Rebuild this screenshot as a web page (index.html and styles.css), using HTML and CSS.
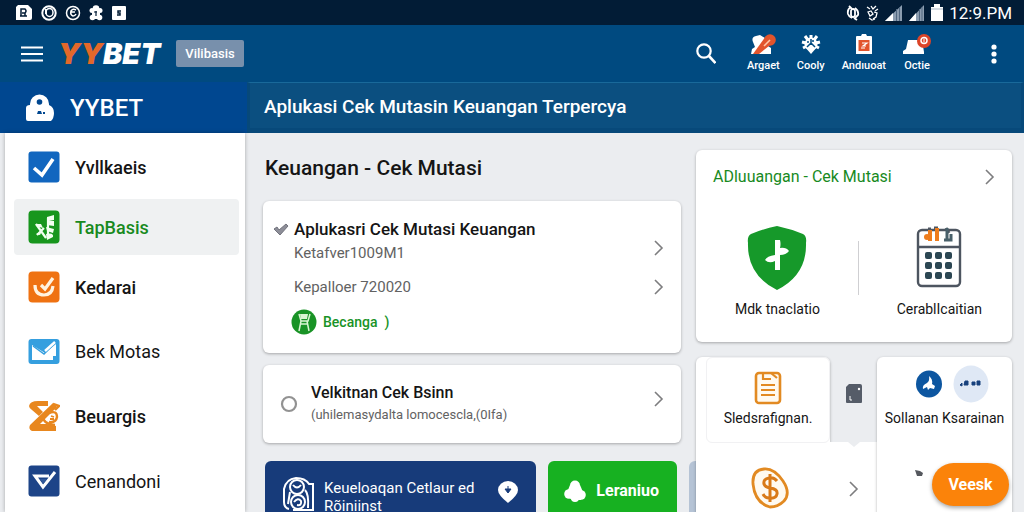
FILE: index.html
```html
<!DOCTYPE html>
<html lang="id">
<head>
  <meta charset="UTF-8" />
  <meta name="viewport" content="width=device-width, initial-scale=1" />
  <title>YYBET</title>
  <link rel="stylesheet" href="styles.css">
</head>
<body>

<div class="statusbar">
  <div class="status-left">
    <svg width="18" height="16" viewBox="0 0 18 16"><path d="M3 0h10l4 4v9a2 2 0 0 1-2 2H1V2z" fill="#fff"/><path d="M6 11V4h4q2 2 0 4H7M10 8v3H5M10 11h2" fill="none" stroke="#031c36" stroke-width="1.5"/></svg>
    <svg width="16" height="16" viewBox="0 0 16 16"><circle cx="8" cy="8" r="6.7" fill="none" stroke="#fff" stroke-width="2"/><ellipse cx="8.500" cy="7.500" rx="3.500" ry="4" fill="none" stroke="#fff" stroke-width="1.500"/><path d="M5 4v5" stroke="#fff" stroke-width="2"/></svg>
    <svg width="16" height="16" viewBox="0 0 16 16"><circle cx="8" cy="8" r="6.500" fill="none" stroke="#fff" stroke-width="1.500"/><path d="M11 5Q8 3 6 6q-1 4 2 5 2 0 3-2M6 7h4" fill="none" stroke="#fff" stroke-width="1.600"/></svg>
    <svg width="14" height="16" viewBox="0 0 14 16"><g fill="#fff"><circle cx="7" cy="3.500" r="3.300"/><circle cx="3" cy="5.500" r="2.500"/><circle cx="11" cy="5.500" r="2.500"/><circle cx="3.500" cy="12.500" r="2.800"/><circle cx="10.500" cy="12.500" r="2.800"/><rect x="3" y="4" width="8" height="10"/></g><path d="M5 7h3M7 6v5" stroke="#031c36" stroke-width="1.200"/></svg>
    <svg width="16" height="16" viewBox="0 0 16 16"><rect x="1" y="1" width="14" height="14" rx="1" fill="#fff"/><path d="M10 6H7v2h2v2H6" fill="none" stroke="#031c36" stroke-width="1.500"/></svg>
  </div>
  <div class="status-right">
    <svg width="14" height="18" viewBox="0 0 14 18"><g fill="none" stroke="#fff" stroke-width="1.800"><path d="M5 3Q1 5 2 10q1 3 4 4M3 2l3 3M9 4q4 3 3 7l-3 3"/><rect x="5" y="5" width="4" height="8" rx="2"/><path d="M8 14l3 2"/></g></svg>
    <svg width="13" height="18" viewBox="0 0 13 18"><g fill="none" stroke="#fff" stroke-width="1.300"><path d="M1 3l3 2M5 2l2 3 3-3M12 5L9 7M2 8l3-1 2 3-3 2zM8 8l3 1-1 4-3 2M3 14l3 2 3-1" /></g></svg>
    <svg width="18" height="18" viewBox="0 0 18 18"><path d="M17 1v16H0z" fill="#8b9caf"/><path d="M8 9v8H0z" fill="#fff"/><path d="M11.500 5v12M14.500 3v14" stroke="#50667f"/></svg>
    <svg width="16" height="18" viewBox="0 0 16 18"><path d="M15 1v16H0z" fill="#8b9caf"/><path d="M7 9v8H0z" fill="#fff"/><path d="M10.500 5v12M13 3v14" stroke="#50667f"/></svg>
    <svg width="12" height="18" viewBox="0 0 12 18"><path d="M3 0h6v3h3v14H0V3h3z" fill="#fff"/><path d="M0 5h12" stroke="#a9b5c3"/></svg>
    <span>12:9.PM</span>
  </div>
</div>

<header class="topbar">
  <button class="icon-btn" aria-label="Menu">
    <svg width="22" height="16" viewBox="0 0 22 16"><path d="M0 1.500h22M0 8h22M0 14.500h22" stroke="#fff" stroke-width="2.200"/></svg>
  </button>
  <a href="#" class="logo"><span>YY</span>BET</a>
  <button class="chip">Vilibasis</button>
  <div class="tools">
    <button class="icon-btn search" aria-label="Cari">
      <svg width="20" height="21" viewBox="0 0 20 21"><circle cx="8" cy="8" r="6.700" fill="none" stroke="#fff" stroke-width="2.200"/><path d="M12.500 12.500l7 7.500" stroke="#fff" stroke-width="2.600"/></svg>
    </button>
    <button class="tool">
      <svg width="28" height="22" viewBox="0 0 28 22"><path d="M4 8Q2 3 7 2l4-1 5 3v6l6 4v6H2l1-5 3-2z" fill="#fff"/><circle cx="21" cy="6" r="5.800" fill="#e2542c"/><path d="M4 20L17 2l8 6-15 12z" fill="#e2542c"/><path d="M15 12l6-6" stroke="#ffc8a8" stroke-width="1.600"/></svg>
      Argaet
    </button>
    <button class="tool">
      <svg width="20" height="22" viewBox="0 0 20 22"><circle cx="10" cy="10" r="6.500" fill="#fff"/><path d="M4 13l6 7 6-7z" fill="#fff"/><g stroke="#fff" stroke-width="3"><path d="M10 1v4M1 8l4 1M19 8l-4 1M4 2l3 4M16 2l-3 4M2 14l4-2M18 14l-4-2"/></g><path d="M10 5v4l-4 4M10 9l4 4M6 8h2M12 6v2" fill="none" stroke="#004a80" stroke-width="1.500"/></svg>
      Cooly
    </button>
    <button class="tool">
      <svg width="18" height="22" viewBox="0 0 18 22"><path d="M2 2h4l1-2h4l1 2h4q1 0 1 1v17H1V3q0-1 1-1z" fill="#fff"/><rect x="3.500" y="6" width="11" height="11" fill="#e2542c"/><path d="M7 9h5l-4 3h3M6 14h4" fill="none" stroke="#fff" stroke-width="1.200"/></svg>
      Andıuoat
    </button>
    <button class="tool">
      <svg width="28" height="22" viewBox="0 0 28 22"><path d="M5 6h14l2 12v2H0v-3l3-2z" fill="#fff"/><circle cx="21" cy="7" r="7" fill="#dc4428"/><circle cx="21" cy="6.500" r="3" fill="none" stroke="#fff" stroke-width="1.500"/><path d="M21 4.500v4" stroke="#fff"/></svg>
      Octie
    </button>
    <button class="icon-btn more" aria-label="Lainnya">
      <svg width="6" height="20" viewBox="0 0 6 20"><g fill="#fff"><circle cx="3" cy="3" r="2.600"/><circle cx="3" cy="10" r="2.600"/><circle cx="3" cy="17" r="2.600"/></g></svg>
    </button>
  </div>
</header>

<div class="subbar">
  <div class="account">
    <svg width="28" height="28" viewBox="0 0 28 28"><path d="M4 11v-1a9.500 9.500 0 0 1 19 0v1q5 2 5 8 0 5-3 8H2q-2 0-2-2V14q0-3 4-3z" fill="#fff"/><circle cx="13.500" cy="8" r="2.800" fill="#004790"/><path d="M12 17h3l1 3h-5zM17 18h2v2h-2z" fill="#004790"/></svg>
    YYBET
  </div>
  <h1 class="page-title">Aplukasi Cek Mutasin Keuangan Terpercya</h1>
</div>

<div class="layout">
  <nav class="sidebar">
    <div class="menu-group">
      <a href="#">
        <svg width="32" height="32" viewBox="0 0 32 32"><rect x=".5" y=".5" width="31" height="31" rx="3" fill="#1166bf"/><path d="M6 17l8 7L25 8" fill="none" stroke="#fff" stroke-width="3.600"/></svg>
        Yvllkaeis
      </a>
      <a href="#" class="active">
        <svg width="32" height="34" viewBox="0 0 32 34"><rect x=".5" y=".5" width="31" height="33" rx="4" fill="#17961d"/><path d="M19 7l7-2v5l-5 1h5v5l-7-1v-8zM18 17l8 2-1 4-6-2zM18 24q8-2 7 3l-6 3zM7 14h6l2 4-4-1zM8 24l6-3-2 4z" fill="#f2fff0"/><path d="M8 14l10 14M16 18l-7 7M20 8v20" stroke="#f2fff0" stroke-width="2.200"/></svg>
        TapBasis
      </a>
      <a href="#">
        <svg width="32" height="32" viewBox="0 0 32 32"><rect x=".5" y=".5" width="31" height="31" rx="4" fill="#ef7212"/><path d="M7 14q0 10 9 10 8 0 9-9M13 14l4 4 8-11" fill="none" stroke="#fff3e0" stroke-width="3.200"/></svg>
        Kedarai
      </a>
    </div>
    <div class="menu-group spaced">
      <a href="#" class="light">
        <svg width="32" height="32" viewBox="0 0 32 32"><rect x=".5" y="4" width="31" height="25" rx="3" fill="#359fdf"/><path d="M4 10l13 8L28 9v12h-3v4H4z" fill="#fff"/><path d="M5 11l11 8L28 7" fill="none" stroke="#359fdf" stroke-width="1.500"/><path d="M17 16l10-9" stroke="#fff" stroke-width="2.500"/></svg>
        Bek Motas
      </a>
      <a href="#">
        <svg width="32" height="32" viewBox="0 0 32 32"><path d="M1 6q1-5 9-5h10v5H9l6 6-4 4-7-6q-3-2-3-4z" fill="#e8871e"/><path d="M2 25L25 3l4 4-17 17h7l9 2v5H4q-4-2-2-6z" fill="#e8871e"/><path d="M25 4l6 2-4 4M21 13q8-3 8 4-1 6-8 5M15 19q4 6 12 6" fill="none" stroke="#e8871e" stroke-width="2.400"/><path d="M23 16l3 1M22 19h4" fill="none" stroke="#e8871e" stroke-width="1.800"/></svg>
        Beuargis
      </a>
      <a href="#" class="light">
        <svg width="32" height="32" viewBox="0 0 32 32"><rect x=".5" y=".5" width="31" height="31" rx="3" fill="#1d4488"/><path d="M21 11H7l8 11L27 7" fill="none" stroke="#fff" stroke-width="3"/><path d="M12 14h7l-4 5z" fill="#31599a"/></svg>
        Cenandoni
      </a>
    </div>
  </nav>

  <main class="content">
    <section class="feed">
      <h2>Keuangan - Cek Mutasi</h2>

      <div class="card balance">
        <a href="#" class="row">
          <svg class="lead" width="16" height="14" viewBox="0 0 16 14"><path d="M1 7l3-2 2 3 7-6 2 2-8 9z" fill="#8d8e98" stroke="#72737d"/></svg>
          <span class="text"><b>Aplukasri Cek Mutasi Keuangan</b><small>Ketafver1009M1</small></span>
          <svg class="chevron low" width="10" height="16" viewBox="0 0 10 16"><path d="M1 1l7 7-7 7" fill="none" stroke="#7d7d7f" stroke-width="1.600"/></svg>
        </a>
        <a href="#" class="row second">
          <span class="text"><small>Kepalloer 720020</small></span>
          <svg class="chevron" width="10" height="16" viewBox="0 0 10 16"><path d="M1 1l7 7-7 7" fill="none" stroke="#7d7d7f" stroke-width="1.600"/></svg>
        </a>
        <a href="#" class="row tag">
          <svg width="26" height="26" viewBox="0 0 26 26"><circle cx="13" cy="13" r="12.500" fill="#199326"/><path d="M8 5l2 7h7l2-7M8 22l2-10M18 22l-2-10M9 15h8" fill="none" stroke="#d9f5d2" stroke-width="1.500"/><path d="M9 5h8l-1 5h-6z" fill="#d9f5d2"/></svg>
          Becanga &nbsp;)
        </a>
      </div>

      <div class="card">
        <a href="#" class="row option">
          <svg width="18" height="18" viewBox="0 0 18 18"><circle cx="9" cy="9" r="7" fill="none" stroke="#929292" stroke-width="2.200"/></svg>
          <span class="text"><b>Velkitnan Cek Bsinn</b><small>(uhilemasydalta lomocescla,(0Ifa)</small></span>
          <svg class="chevron" width="10" height="16" viewBox="0 0 10 16"><path d="M1 1l7 7-7 7" fill="none" stroke="#7d7d7f" stroke-width="1.600"/></svg>
        </a>
      </div>

      <div class="actions">
        <button class="action blue">
          <svg width="32" height="36" viewBox="0 0 32 36"><g fill="none" stroke="#fff" stroke-width="2"><path d="M6 32Q1 31 1 25V12Q3 2 13 1q9 0 13 6h4v26H10"/><circle cx="14" cy="10" r="7"/><path d="M10 8q4 5 8 0M7 15l-2 12M22 13q4 4 3 18"/><circle cx="15" cy="25" r="7"/><path d="M11 25q4-5 7-1 1 5-4 4"/></g></svg>
          <span>Keueloaqan Cetlaur ed<br>Rõiniinst</span>
          <svg class="pin" width="20" height="22" viewBox="0 0 20 22"><path d="M10 22Q0 14 0 9a10 9 0 0 1 20 0q0 5-10 13z" fill="#fff"/><path d="M10 5v6M7 8l3 4 3-4z" fill="#173b7a" stroke="#173b7a"/></svg>
        </button>
        <button class="action green">
          <svg width="22" height="22" viewBox="0 0 22 22"><g fill="#fff"><circle cx="11" cy="5.500" r="5"/><circle cx="5" cy="14" r="4.800"/><circle cx="17" cy="15" r="4.800"/><path d="M6 5h10l3 7-2 8H8l-6-5z"/><circle cx="11" cy="18" r="4"/></g></svg>
          Leraniuo
        </button>
        <span class="action peek"></span>
      </div>
    </section>

    <aside class="side">
      <div class="card summary">
        <a href="#" class="summary-head">ADluuangan - Cek Mutasi
          <svg class="chevron" width="10" height="16" viewBox="0 0 10 16"><path d="M1 1l7 7-7 7" fill="none" stroke="#7d7d7f" stroke-width="1.600"/></svg>
        </a>
        <div class="shortcuts">
          <a href="#">
            <svg width="60" height="64" viewBox="0 0 60 64"><path d="M30 0q14 3 26 8 4 2 3 9 1 32-29 47Q0 49 1 17 0 10 4 8q12-5 26-8z" fill="#16992a"/><path d="M28 14h5q1 4 0 8 6-1 9 3-3 4-9 4v15h-5v-9q-6 3-10-1 2-4 10-5z" fill="#fff"/></svg>
            Mdk tnaclatio
          </a>
          <span class="divider"></span>
          <a href="#">
            <svg width="46" height="64" viewBox="0 0 46 64"><rect x="2" y="4" width="42" height="56" rx="4" fill="#fff" stroke="#4d5560" stroke-width="2.400"/><path d="M2 21h42" stroke="#4d5560" stroke-width="2.400"/><path d="M12 3h3M18 2h4M30 2l3 5" stroke="#4d5560" stroke-width="3"/><path d="M14 4v11M21 2v13" stroke="#ee7d1d" stroke-width="4"/><circle cx="11" cy="11" r="3" fill="#ee7d1d"/><path d="M31 2v13M28 14h7V8" fill="none" stroke="#48606a" stroke-width="3"/><g fill="#2b4652"><rect x="9" y="26" width="7" height="7" rx="2"/><rect x="19" y="26" width="7" height="7" rx="2"/><rect x="29" y="26" width="7" height="7" rx="2"/><rect x="9" y="36" width="7" height="7" rx="2"/><rect x="19" y="36" width="7" height="7" rx="2"/><rect x="29" y="36" width="7" height="7" rx="2"/><rect x="9" y="46" width="7" height="7" rx="2"/><rect x="19" y="46" width="7" height="7" rx="2"/><rect x="29" y="46" width="7" height="7" rx="2"/></g></svg>
            CerablIcaitian
          </a>
        </div>
      </div>

      <div class="tiles">
        <div class="card tile">
          <a href="#" class="inner">
            <svg width="28" height="34" viewBox="0 0 28 34"><rect x="2" y="2" width="24" height="30" rx="3" fill="#fffaf0" stroke="#e28a22" stroke-width="2.600"/><path d="M9 3v5h8M17 2l6 5M7 14h14M7 19h14M7 24h14" fill="none" stroke="#e28a22" stroke-width="2.200"/></svg>
            Sledsrafignan.
          </a>
          <a href="#" class="coin">
            <svg width="40" height="42" viewBox="0 0 40 42"><path d="M3 17Q2 3 14 2q10-1 19 12 8 12 1 20-6 6-14 6Q5 36 3 17z" fill="#fffaf0" stroke="#e28a22" stroke-width="2.800"/><path d="M27 14q-3-4-8-3-6 1-5 6 1 3 6 4 8 1 7 6-1 5-8 4-4 0-6-4M20 7v28" fill="none" stroke="#d97a18" stroke-width="3"/></svg>
          </a>
        </div>
        <div class="middle">
          <svg width="16" height="20" viewBox="0 0 16 20"><path d="M3 0h11q2 0 2 2v16q0 1-1 1H1q-1 0-1-1V3z" fill="#555c68"/><path d="M4 12v4h2" stroke="#fff" fill="none"/><circle cx="13" cy="5" r="1.200" fill="#fff"/></svg>
          <a href="#" class="next" aria-label="Berikutnya">
            <svg width="12" height="5" viewBox="0 0 12 5"><path d="M0 0h12L6 5z" fill="#ebedf0"/></svg>
            <svg width="10" height="16" viewBox="0 0 10 16"><path d="M1 1l7 7-7 7" fill="none" stroke="#7d7d7f" stroke-width="1.600"/></svg>
          </a>
        </div>
        <div class="card tile contact">
          <div class="avatars">
            <svg width="26" height="28" viewBox="0 0 26 28"><ellipse cx="13" cy="14" rx="13" ry="13.500" fill="#0d56a0"/><path d="M13 6q4 3 3 8l3 2-1 3-4-1-2 2-1-3-4 2q-1-4 4-6 3-2 2-7z" fill="#fff"/></svg>
            <svg width="36" height="38" viewBox="0 0 36 38"><ellipse cx="18" cy="19" rx="17.500" ry="18.500" fill="#dfe8f5"/><path d="M7 20l2-2v3zM12 16h3v4h-4zM19 17h3v3h-3zM24 16h3v4h-3z" fill="#17407d" stroke="#17407d"/></svg>
          </div>
          Sollanan Ksarainan
          <svg class="speck" width="8" height="6" viewBox="0 0 8 6"><path d="M0 0l5 1 3 2-1 3H2z" fill="#55585e"/></svg>
        </div>
      </div>
    </aside>
  </main>
</div>

<button class="fab">Veesk</button>

</body>
</html>
```
FILE: styles.css
```css
* {
  box-sizing: border-box;
}
body {
  margin: 0;
  height: 100vh;
  display: flex;
  flex-direction: column;
  overflow: hidden;
  background: #ebedf0;
  color: #151515;
  font-family: Roboto, sans-serif;
  font-size: 16px;
}
a {
  color: inherit;
  text-decoration: none;
}
button {
  border: none;
  padding: 0;
  background: none;
  color: inherit;
  font: inherit;
  cursor: pointer;
}
svg {
  display: block;
  flex: none;
}

/* status bar */
.statusbar {
  flex: none;
  display: flex;
  justify-content: space-between;
  height: 25px;
  padding: 0 12px 0 15px;
  background: #021c36;
  color: #fff;
  font-size: 17px;
}
.status-left, .status-right {
  display: flex;
  align-items: center;
  gap: 8px;
}
.status-right {
  gap: 6px;
}

/* top bar */
.topbar {
  flex: none;
  display: flex;
  align-items: center;
  height: 57px;
  padding: 0 27px 0 21px;
  background: #004a80;
  color: #fff;
}
.logo {
  margin-left: 15px;
  font-family: Inter, sans-serif;
  font-size: 29px;
  font-weight: 900;
  font-style: italic;
}
.logo span {
  color: #e2682a;
}
.chip {
  height: 27px;
  margin-left: 16px;
  padding: 0 9px;
  border-radius: 2px;
  background: #7890ac;
  font-size: 13px;
  font-weight: 500;
}
.tools {
  display: flex;
  align-items: center;
  gap: 17px;
  margin-left: auto;
}
.tool {
  display: flex;
  flex-direction: column;
  align-items: center;
  gap: 2px;
  font-size: 11px;
  font-weight: 500;
  line-height: 16px;
}
.search {
  margin-right: 14px;
}
.more {
  margin-left: 43px;
}

.subbar {
  flex: none;
  display: flex;
  height: 51px;
  background: #004790;
  color: #fff;
}
.account {
  display: flex;
  align-items: center;
  gap: 16px;
  width: 247px;
  padding-left: 26px;
  font-size: 24px;
  font-weight: 500;
}
.page-title {
  flex: 1;
  margin: 0;
  padding-left: 14px;
  border: 3px solid #07497a;
  border-top: 1px solid #19699a;
  border-bottom-width: 5px;
  background: #0b4f80;
  font-size: 19px;
  font-weight: 500;
  line-height: 48px;
}

.layout {
  flex: 1;
  display: flex;
  min-height: 0;
}

/* sidebar */
.sidebar {
  flex: none;
  width: 240px;
  margin-left: 5px;
  padding: 4px 6px 0 9px;
  background: #fff;
  box-shadow: 0 0 4px rgba(0,0,0,0.3);
}
.menu-group a {
  display: flex;
  align-items: center;
  gap: 15px;
  height: 56px;
  margin: 2px 0 4px;
  padding-left: 14px;
  border-radius: 4px;
  font-size: 18px;
  font-weight: 500;
}
.menu-group.spaced a {
  margin: 8px 0 9px;
}
.menu-group .active {
  background: #eff1f2;
  color: #188a1e;
}
.menu-group .light {
  font-weight: 400;
}

/* content */
.content {
  flex: 1;
  display: grid;
  grid-template-columns: minmax(0, 418fr) minmax(0, 316fr);
  gap: 15px;
  padding: 17px 12px 0 18px;
  overflow: hidden;
}
.card {
  border-radius: 6px;
  background: #fff;
  box-shadow: 0 1px 3px rgba(0,0,0,0.3);
}
h2 {
  margin: 0 0 15px 2px;
  font-size: 21px;
  font-weight: 500;
  line-height: 36px;
}
.chevron {
  margin-left: auto;
}
.low {
  margin-top: 14px;
}
.row {
  display: flex;
  align-items: center;
  padding-right: 17px;
}
.text b, .text small {
  display: block;
  font-weight: 500;
  line-height: 24px;
}
.text b {
  font-size: 17px;
}
.text small {
  color: #626262;
  font-size: 15px;
  font-weight: 400;
}
.balance {
  height: 152px;
  margin-bottom: 12px;
  padding: 16px 0 0 10px;
}
.balance .text {
  margin-left: 5px;
}
.lead {
  align-self: flex-start;
  margin-top: 5px;
}
.balance .second {
  height: 24px;
  margin: 10px 0;
  padding-left: 16px;
}
.tag {
  gap: 6px;
  padding-left: 18px;
  color: #199326;
  font-size: 14px;
  font-weight: 500;
}
.option {
  height: 78px;
  padding-left: 17px;
}
.option .text {
  margin-left: 13px;
}
.option .text b, .option .text small {
  line-height: 22px;
}
.option .text b {
  font-size: 16px;
}
.option .text small {
  font-size: 13px;
}
.option .chevron {
  margin-bottom: 10px;
}

.actions {
  display: grid;
  grid-template-columns: minmax(0, 272fr) minmax(0, 129fr) minmax(0, 7fr);
  gap: 12px;
  margin: 18px -15px 0 2px;
}
.action {
  display: flex;
  height: 70px;
  border-radius: 6px;
  color: #fff;
  font-size: 15px;
  text-align: left;
  white-space: nowrap;
}
.blue {
  gap: 9px;
  padding: 16px 18px;
  background: #173b7a;
  line-height: 18px;
}
.blue span {
  padding-top: 2px;
}
.pin {
  margin: 4px 0 0 auto;
}
.green {
  gap: 10px;
  padding: 19px 16px;
  background: #17b121;
  font-size: 16px;
  font-weight: 700;
  line-height: 22px;
}
.peek {
  border-radius: 6px 0 0 0;
  background: #b5c3d5;
}

/* right column */
.side {
  position: relative;
}
.summary {
  height: 192px;
  padding: 16px 17px 0;
}
.summary-head {
  display: flex;
  align-items: center;
  color: #188a1e;
  font-size: 16px;
  line-height: 22px;
}
.shortcuts {
  display: flex;
  justify-content: space-between;
  margin-top: 38px;
  padding: 0 13px 0 22px;
}
.shortcuts a {
  display: flex;
  flex-direction: column;
  align-items: center;
  gap: 8px;
  font-size: 14px;
  line-height: 22px;
}
.divider {
  width: 1px;
  height: 54px;
  margin-top: 15px;
  background: #cfcfd2;
}
.tiles {
  display: grid;
  grid-template-columns: 134fr 47fr 135fr;
  height: 190px;
  margin-top: 15px;
}
.tile {
  font-size: 14px;
}
.inner {
  display: flex;
  flex-direction: column;
  align-items: center;
  gap: 5px;
  height: 86px;
  margin-left: 10px;
  padding-top: 13px;
  border: 1px solid #f1f1f3;
  border-radius: 6px;
}
.coin {
  display: flex;
  justify-content: center;
  margin: 24px 0 0 14px;
}
.middle {
  display: flex;
  flex-direction: column;
  align-items: center;
  padding-top: 27px;
}
.next {
  align-self: stretch;
  display: flex;
  flex: 1;
  flex-direction: column;
  align-items: center;
  gap: 34px;
  margin-top: 38px;
  background: #fff;
}
.contact {
  display: flex;
  flex-direction: column;
  align-items: center;
  padding-top: 8px;
  white-space: nowrap;
}
.avatars {
  display: flex;
  align-items: center;
  gap: 11px;
  margin: 0 0 7px 16px;
}
.speck {
  margin: 44px 52px 0 0;
}

/* floating button over the cards */
.fab {
  position: absolute;
  right: 15px;
  bottom: 6px;
  width: 77px;
  height: 43px;
  border-radius: 22px;
  background: #fb830a;
  box-shadow: 0 2px 4px rgba(0,0,0,0.35);
  color: #fff;
  font-size: 16px;
  font-weight: 700;
}
```
